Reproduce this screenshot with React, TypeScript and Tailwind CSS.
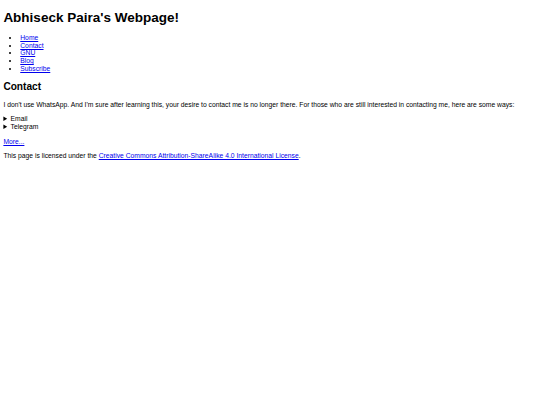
export default function App() {
  const links = ['Home', 'Contact', 'GNU', 'Blog', 'Subscribe'];

  return (
    <div className="min-h-screen bg-white text-black font-['Liberation_Sans',Arial,sans-serif] text-[6.75px] leading-[7.7px] px-[3.375px] pt-[9.5px]">
      <h1 className="text-[13.5px] leading-[15.5px] font-bold mt-0 mb-[9px]">Abhiseck Paira's Webpage!</h1>

      <ul className="list-disc pl-[16.875px] my-[6.75px]">
        {links.map((l) => (
          <li key={l}>
            <a href="#" className="text-[#0000ee] underline">{l}</a>
          </li>
        ))}
      </ul>

      <h2 className="text-[10.125px] leading-[11.6px] font-bold my-[8.4px]">Contact</h2>

      <p className="my-[6.75px]">
        I don't use WhatsApp. And I'm sure after learning this, your desire to contact me is no longer there. For those who are still interested in contacting me, here are some ways:
      </p>

      <details>
        <summary className="cursor-pointer">Email</summary>
      </details>
      <details>
        <summary className="cursor-pointer">Telegram</summary>
      </details>

      <p className="my-[6.75px]">
        <a href="#" className="text-[#0000ee] underline">More...</a>
      </p>

      <p className="my-[6.75px]">
        This page is licensed under the{' '}
        <a href="#" className="text-[#0000ee] underline">Creative Commons Attribution-ShareAlike 4.0 International License</a>.
      </p>
    </div>
  );
}
